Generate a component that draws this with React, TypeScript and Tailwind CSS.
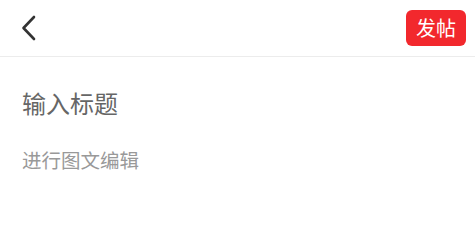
import React from "react";

export default function App() {
  const font = { fontFamily: '"Noto Sans CJK SC", "Noto Sans", sans-serif' };
  return (
    <div className="w-[475px] h-[248px] bg-white" style={font}>
      <div className="h-[57px] flex items-center justify-between border-b border-[#ececec] pl-[20px] pr-[9px]">
        <svg width="18" height="28" viewBox="0 0 18 28" fill="none">
          <path d="M14 3 L3.5 14 L14 25" stroke="#333" strokeWidth="2.6" strokeLinecap="round" strokeLinejoin="round" />
        </svg>
        <button className="w-[60px] h-[36px] rounded-[6px] bg-[#f2282d] text-white text-[20px] leading-none flex items-center justify-center">
          发帖
        </button>
      </div>
      <div className="px-[22px]">
        <div className="mt-[31px] text-[24px] leading-[30px] text-[#666]">输入标题</div>
        <div className="mt-[30px] text-[19.5px] leading-[24px] text-[#999]">进行图文编辑</div>
      </div>
    </div>
  );
}
